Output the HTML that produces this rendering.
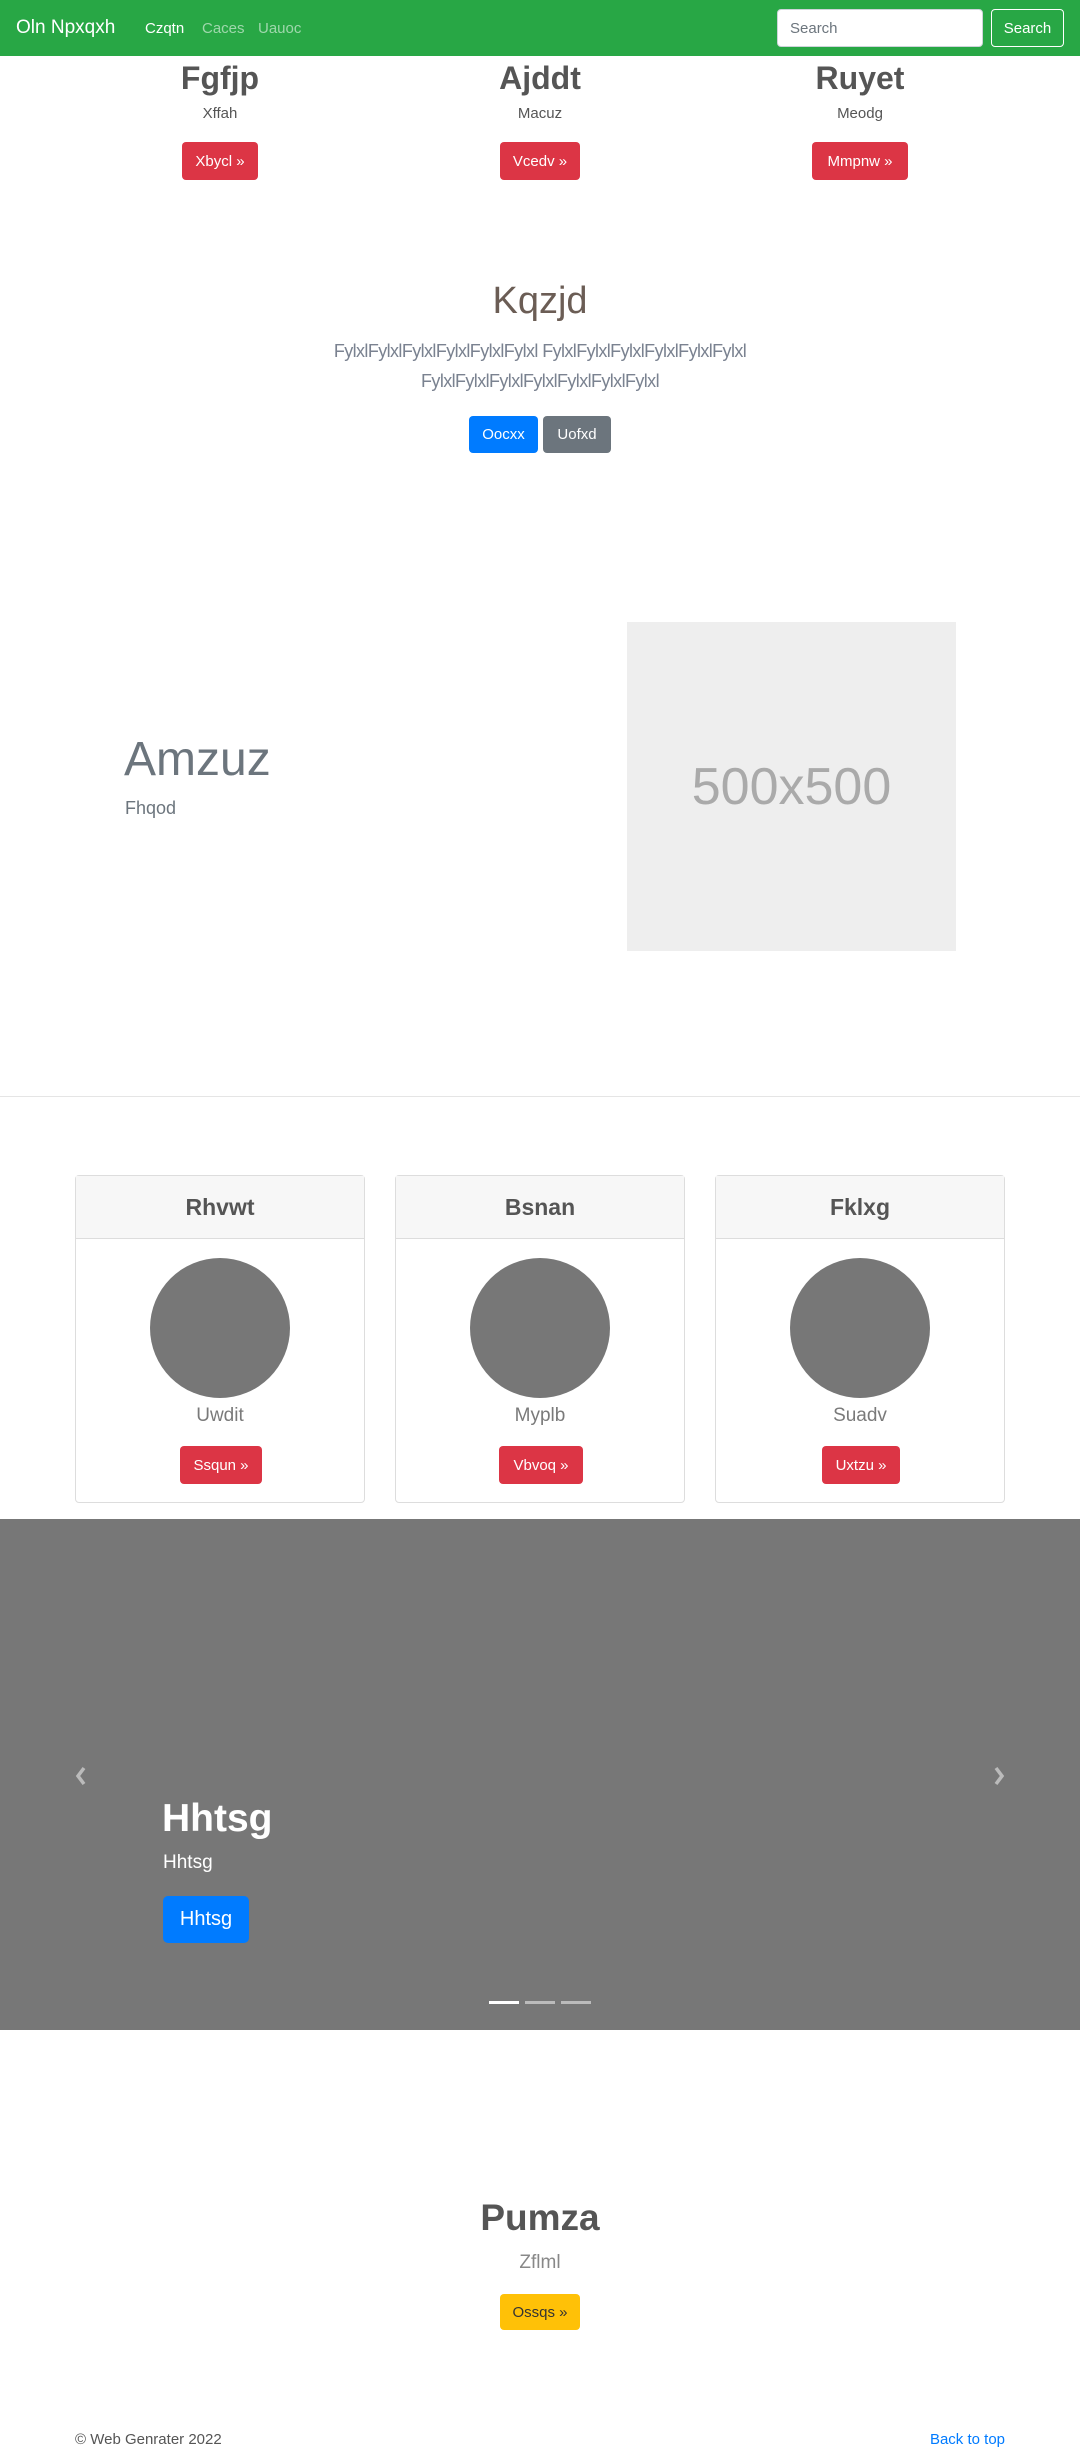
<!DOCTYPE html>
<html><head><meta charset="utf-8"><style>
*{box-sizing:border-box;margin:0;padding:0}
body{width:1080px;height:2452px;position:relative;font-family:"Liberation Sans",sans-serif;color:#212529;background:#fff;overflow:hidden}
.a{position:absolute}
.c{text-align:center;transform:translateX(-50%);white-space:nowrap}
.btn{position:absolute;border-radius:4px;color:#fff;font-size:15px;display:flex;align-items:center;justify-content:center}
.red{background:#dc3545}
</style></head><body>
<div class="a" style="left:0;top:0;width:1080px;height:56px;background:#28a745"></div>
<div class="a" style="left:16px;top:17px;font-size:19px;color:#fff">Oln Npxqxh</div>
<div class="a" style="left:145px;top:20px;font-size:15px;color:#fff">Czqtn</div>
<div class="a" style="left:202px;top:20px;font-size:15px;color:rgba(255,255,255,.55)">Caces</div>
<div class="a" style="left:258px;top:20px;font-size:15px;color:rgba(255,255,255,.55)">Uauoc</div>
<div class="a" style="left:777px;top:9px;width:206px;height:38px;background:#fff;border-radius:4px;border:1px solid #ced4da;padding:10px 12px;font-size:15px;color:#6c757d">Search</div>
<div class="a" style="left:991px;top:9px;width:73px;height:38px;border:1px solid #fff;border-radius:4px;color:#fff;font-size:15px;text-align:center;line-height:38px">Search</div>

<div class="a c" style="left:220px;top:60px;font-size:32px;font-weight:bold;color:#555">Fgfjp</div>
<div class="a c" style="left:540px;top:60px;font-size:32px;font-weight:bold;color:#555">Ajddt</div>
<div class="a c" style="left:860px;top:60px;font-size:32px;font-weight:bold;color:#555">Ruyet</div>
<div class="a c" style="left:220px;top:105px;font-size:15px;color:#555">Xffah</div>
<div class="a c" style="left:540px;top:105px;font-size:15px;color:#555">Macuz</div>
<div class="a c" style="left:860px;top:105px;font-size:15px;color:#555">Meodg</div>
<div class="btn red" style="left:182px;top:142px;width:76px;height:38px">Xbycl »</div>
<div class="btn red" style="left:500px;top:142px;width:80px;height:38px">Vcedv »</div>
<div class="btn red" style="left:812px;top:142px;width:96px;height:38px">Mmpnw »</div>

<div class="a c" style="left:540px;top:280px;font-size:38px;font-weight:300;color:#6b5d55">Kqzjd</div>
<div class="a c" style="left:540px;top:336px;font-size:18px;line-height:30px;color:#7a8290;letter-spacing:-0.6px">FylxlFylxlFylxlFylxlFylxlFylxl FylxlFylxlFylxlFylxlFylxlFylxl<br>FylxlFylxlFylxlFylxlFylxlFylxlFylxl</div>
<div class="btn" style="left:469px;top:416px;width:69px;height:37px;background:#007bff">Oocxx</div>
<div class="btn" style="left:543px;top:416px;width:68px;height:37px;background:#6c757d">Uofxd</div>

<div class="a" style="left:124px;top:732px;font-size:48px;color:#6c757d;font-weight:300">Amzuz</div>
<div class="a" style="left:125px;top:798px;font-size:18px;color:#6c757d">Fhqod</div>
<div class="a" style="left:627px;top:622px;width:329px;height:329px;background:#eee;color:#aaa;font-size:52px;display:flex;align-items:center;justify-content:center">500x500</div>
<div class="a" style="left:0;top:1096px;width:1080px;height:1px;background:#e5e5e5"></div>

<div class="a" style="left:75px;top:1175px;width:290px;height:328px;border:1px solid #ddd;border-radius:4px"><div style="height:63px;background:#f7f7f7;border-bottom:1px solid #ddd;text-align:center;line-height:62px;font-size:23px;font-weight:bold;color:#555">Rhvwt</div><div style="width:140px;height:140px;border-radius:50%;background:#777;margin:19px auto 0"></div><div style="text-align:center;font-size:19px;color:#7a7a7a;margin-top:7px">Uwdit</div><div class="btn red" style="left:104px;top:270px;width:82px;height:38px">Ssqun »</div></div>
<div class="a" style="left:395px;top:1175px;width:290px;height:328px;border:1px solid #ddd;border-radius:4px"><div style="height:63px;background:#f7f7f7;border-bottom:1px solid #ddd;text-align:center;line-height:62px;font-size:23px;font-weight:bold;color:#555">Bsnan</div><div style="width:140px;height:140px;border-radius:50%;background:#777;margin:19px auto 0"></div><div style="text-align:center;font-size:19px;color:#7a7a7a;margin-top:7px">Myplb</div><div class="btn red" style="left:103px;top:270px;width:84px;height:38px">Vbvoq »</div></div>
<div class="a" style="left:715px;top:1175px;width:290px;height:328px;border:1px solid #ddd;border-radius:4px"><div style="height:63px;background:#f7f7f7;border-bottom:1px solid #ddd;text-align:center;line-height:62px;font-size:23px;font-weight:bold;color:#555">Fklxg</div><div style="width:140px;height:140px;border-radius:50%;background:#777;margin:19px auto 0"></div><div style="text-align:center;font-size:19px;color:#7a7a7a;margin-top:7px">Suadv</div><div class="btn red" style="left:106px;top:270px;width:78px;height:38px">Uxtzu »</div></div>

<div class="a" style="left:0;top:1519px;width:1080px;height:511px;background:#777"></div>
<svg class="a" style="left:73px;top:1765px" width="16" height="22"><path d="M11 3 L5 11 L11 19" stroke="#bbb" stroke-width="3.5" fill="none"/></svg>
<svg class="a" style="left:991px;top:1765px" width="16" height="22"><path d="M5 3 L11 11 L5 19" stroke="#bbb" stroke-width="3.5" fill="none"/></svg>
<div class="a" style="left:162px;top:1797px;font-size:39px;font-weight:bold;color:#fff">Hhtsg</div>
<div class="a" style="left:163px;top:1852px;font-size:19px;color:#fff">Hhtsg</div>
<div class="btn" style="left:163px;top:1896px;width:86px;height:47px;background:#007bff;font-size:20px;border-radius:5px">Hhtsg</div>
<div class="a" style="left:489px;top:2001px;width:30px;height:3px;background:#fff"></div>
<div class="a" style="left:525px;top:2001px;width:30px;height:3px;background:#bbb"></div>
<div class="a" style="left:561px;top:2001px;width:30px;height:3px;background:#bbb"></div>

<div class="a c" style="left:540px;top:2197px;font-size:37px;font-weight:bold;color:#555">Pumza</div>
<div class="a c" style="left:540px;top:2252px;font-size:19px;color:#888;font-weight:300">Zflml</div>
<div class="btn" style="left:500px;top:2294px;width:80px;height:36px;background:#ffc107;color:#333">Ossqs »</div>
<div class="a" style="left:75px;top:2431px;font-size:15px;color:#555">© Web Genrater 2022</div>
<div class="a" style="right:75px;top:2431px;font-size:15px;color:#007bff">Back to top</div>
</body></html>
